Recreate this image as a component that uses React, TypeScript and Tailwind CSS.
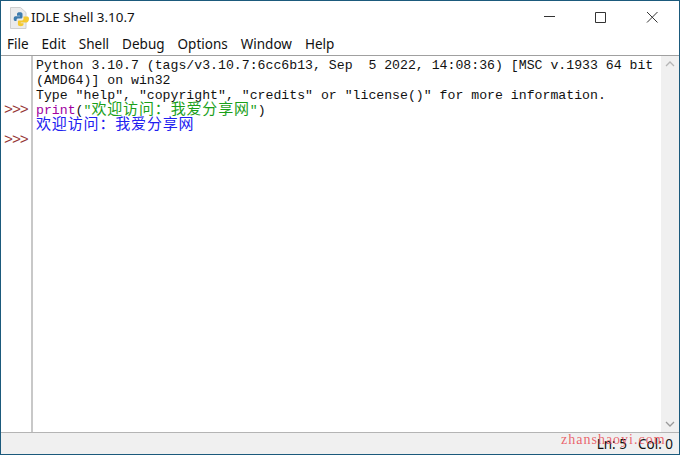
const MENU = ['File', 'Edit', 'Shell', 'Debug', 'Options', 'Window', 'Help'];

const CJK = "font-['Liberation_Mono','Noto_Sans_CJK_SC',monospace] text-[15px] tracking-[0.84px] [text-spacing-trim:space-all]";

function PythonIcon() {
  return (
    <svg width="24" height="24" viewBox="0 0 24 24">
      <path d="M2.500 1.500h10l5.500 5v16h-15.500z" fill="#ebebeb" stroke="#cfcfcf" />
      <path d="M9 8c0-1.300 1-1.800 2.800-1.800S14.500 6.700 14.500 8v3c0 .9-.7 1.500-1.500 1.500h-2.800c-1 0-1.700.7-1.700 1.700v.8H7.200C6.100 15 5.700 14 5.700 12.700s.5-2.400 1.700-2.400H12v-.6H9z" fill="#3f7cae" />
      <path d="M21 12.700c0-1.200-.5-2.300-1.600-2.300h-3.900v2.400c0 1.100-.8 1.800-1.800 1.800h-2.500c-.8 0-1.300.5-1.300 1.300v2.700c0 1.200 1.200 1.700 2.800 1.700s2.800-.5 2.800-1.700v-1.400h-2.800v-.6h5.100c1.500 0 3.200-1.300 3.200-3.900z" fill="#f5c92f" />
    </svg>
  );
}

export default function App() {
  return (
    <div className="w-[680px] h-[455px] flex flex-col relative overflow-hidden border border-[#1b5a7c] bg-white font-['Noto_Sans',sans-serif]">
      {/* title bar */}
      <div className="h-[33px] flex items-center shrink-0 pl-[7px] text-[#111]">
        <PythonIcon />
        <span className="ml-[-1px] text-[13.4px]">IDLE Shell 3.10.7</span>
        <div className="ml-auto flex items-center">
          <svg width="46" height="33" viewBox="0 0 46 33"><path d="M3 15.500h11" stroke="#333" /></svg>
          <svg width="46" height="33" viewBox="0 0 46 33"><path d="M8.500 11.500h10v10h-10z" fill="none" stroke="#333" /></svg>
          <svg width="46" height="33" viewBox="0 0 46 33"><path d="M14 11l10.500 10.500M24.500 11L14 21.500" fill="none" stroke="#333" /></svg>
        </div>
      </div>

      {/* menu bar */}
      <div className="h-[21px] flex items-center shrink-0 pl-[6px] gap-[13px] text-[13.5px] text-[#111]">
        {MENU.map((name) => (
          <span key={name}>{name}</span>
        ))}
      </div>

      {/* editor */}
      <div className="flex-1 flex min-h-0 border-t border-[#a0a0a0] font-['Liberation_Mono','Noto_Sans_CJK_SC',monospace] text-[13.2px] leading-[15px]">
        <div className="w-[32px] shrink-0 border-r-[2px] border-[#c8c8c8] pt-[47px] pl-[3px] text-[15px] tracking-[-1.08px] text-[#953535]">
          <div className="h-[15px]">{'>>>'}</div>
          <div className="h-[15px]" />
          <div className="h-[15px]">{'>>>'}</div>
        </div>
        <div className="flex-1 pl-[3px] pt-[2px] whitespace-pre text-[#111]">
          <div className="h-[15px]">Python 3.10.7 (tags/v3.10.7:6cc6b13, Sep  5 2022, 14:08:36) [MSC v.1933 64 bit</div>
          <div className="h-[15px]">(AMD64)] on win32</div>
          <div className="h-[15px]">Type "help", "copyright", "credits" or "license()" for more information.</div>
          <div className="h-[15px]">
            <span className="text-[#a000a0]">print</span>(<span className="text-[#1aa01a]">"<span className={CJK}>欢迎访问{'\uFF1A'}我爱分享网</span>"</span>)
          </div>
          <div className={`h-[15px] text-[#2020f0] ${CJK}`}>欢迎访问{'\uFF1A'}我爱分享网</div>
        </div>
        <div className="w-[18px] shrink-0 bg-[#f0f0f0] flex flex-col justify-between items-center py-[4px]">
          <svg width="10" height="8" viewBox="0 0 10 8"><path d="M1 6l4-4 4 4" fill="none" stroke="#b5b5b5" strokeWidth="1.300" /></svg>
          <svg width="10" height="8" viewBox="0 0 10 8"><path d="M1 2l4 4 4-4" fill="none" stroke="#9a9a9a" strokeWidth="1.300" /></svg>
        </div>
      </div>

      {/* status bar */}
      <div className="h-[22px] shrink-0 flex items-center justify-end gap-[11px] pr-[6px] pt-[1px] border-t border-[#b4b4b4] bg-[#f0f0f0] text-[13.5px] text-[#111]">
        <span>Ln: 5</span>
        <span>Col: 0</span>
      </div>

      {/* watermark */}
      <div className="absolute left-[560px] top-[428px] text-[14px] tracking-[1px] text-[#e8404a]/80 font-['Liberation_Serif',serif]">
        zhanshaoyi.com
      </div>
    </div>
  );
}
